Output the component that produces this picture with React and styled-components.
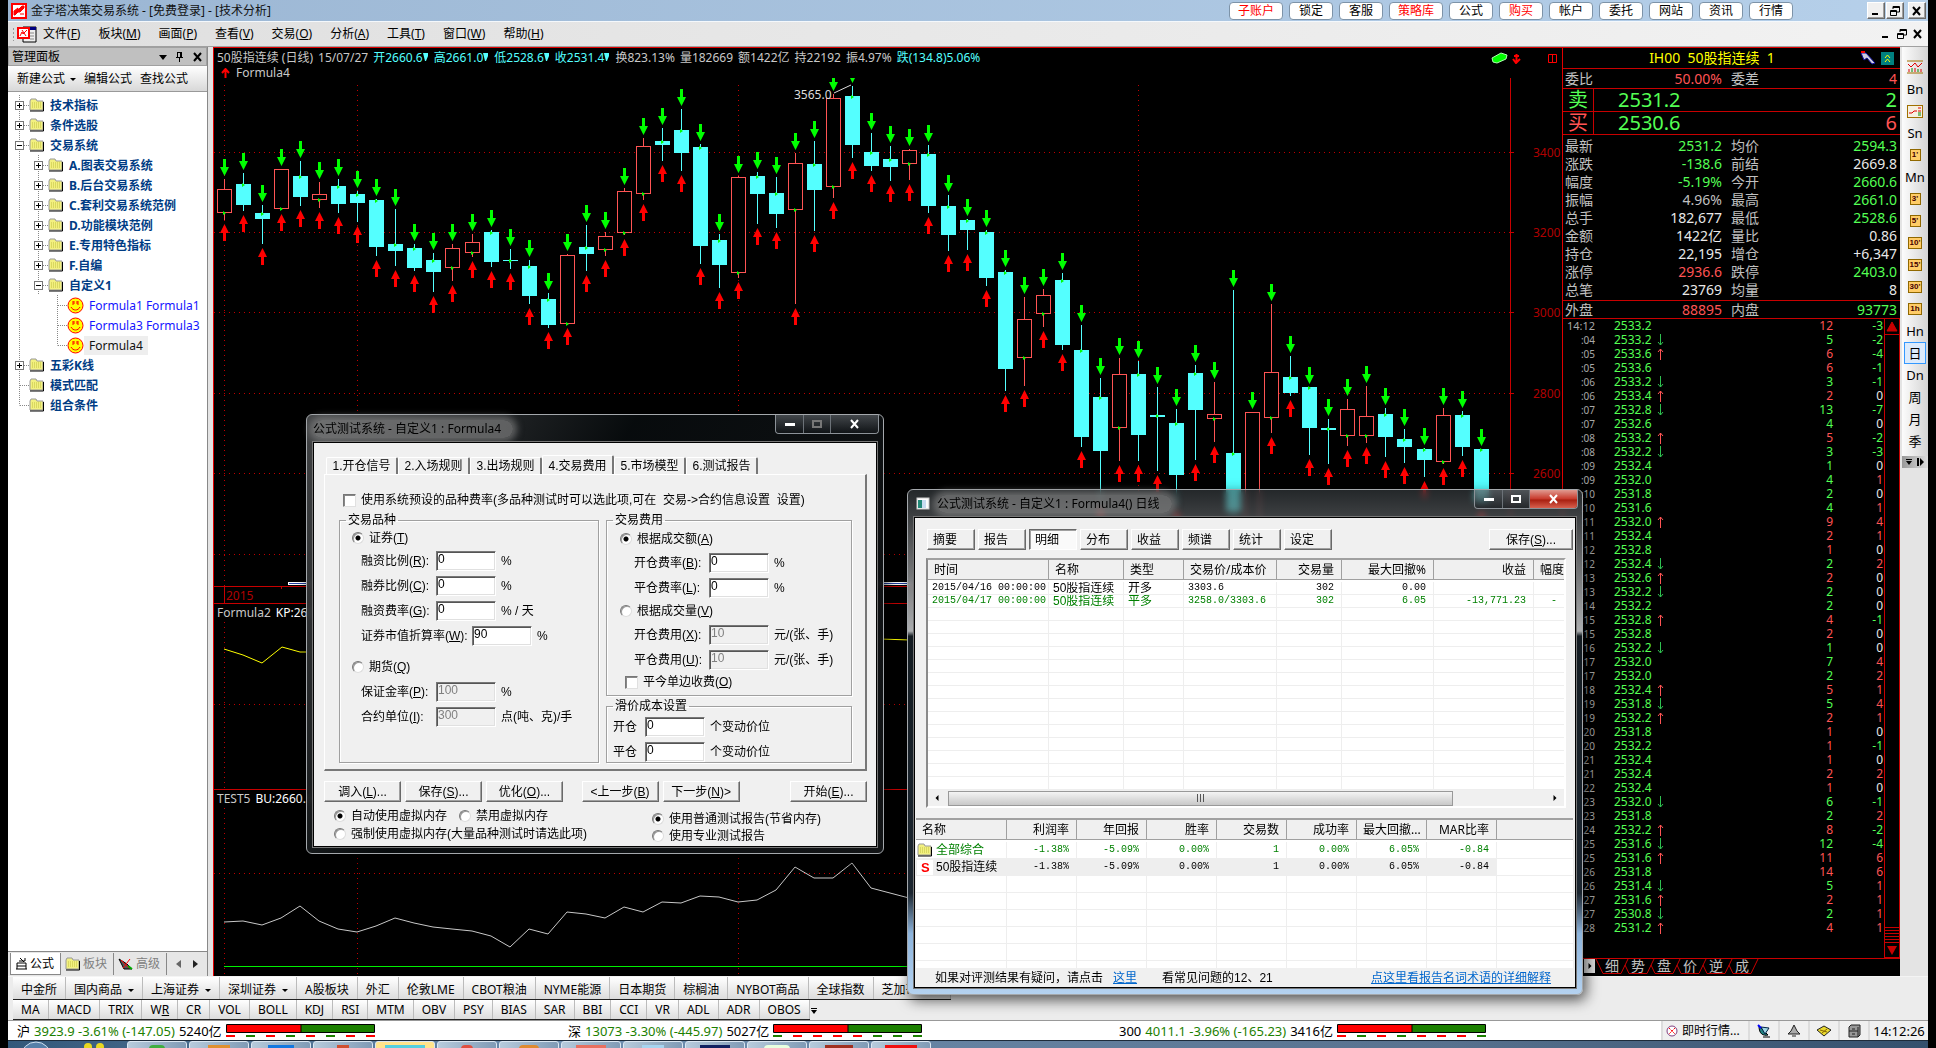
import React from 'react';
import styled, { createGlobalStyle, css } from 'styled-components';

const UI = '"Noto Sans", "Noto Sans CJK SC", sans-serif';
const DIALOG = '"Liberation Sans", "Noto Sans CJK SC", sans-serif';
const MONO = '"Liberation Mono", "Noto Sans CJK SC", monospace';
const CYAN = '#54ffff';
const RED = '#ff5454';
const GREEN = '#54ff54';
const LINE = '#c80000';

const Global = createGlobalStyle`
  * { box-sizing: border-box; }
  html, body { margin: 0; background: #000; }
  body { font: 12px/16px ${UI}; color: #000; overflow: hidden; }
  button { font: inherit; color: inherit; margin: 0; padding: 0; border: 0; background: none; white-space: nowrap; }
  input { font: inherit; margin: 0; }
  table { border-collapse: separate; border-spacing: 0; }
  svg { display: block; flex: none; }
`;

/* ---------- shell ---------- */
const Shell = styled.div`
  position: relative; height: 100vh; display: flex; flex-direction: column;
  padding: 0 8px; background: #000; overflow: hidden;
`;
const TitleBar = styled.header`
  height: 21px; flex: none; display: flex; align-items: center; padding: 0 2px 0 3px;
  background: linear-gradient(90deg, #9bb6d3, #b6d0ea);
`;
const AppTitle = styled.h1`
  margin: 0 auto 0 4px; font: inherit; line-height: 20px; color: #111; white-space: nowrap;
`;
const QuickLinks = styled.nav`display: flex; gap: 6px; margin-right: 74px;`;
const QuickButton = styled.button`
  height: 18px; width: ${(p) => (p.$wide ? 54 : 44)}px; line-height: 14px; border: 1px solid #7d93a8; border-radius: 4px;
  background: #fff; color: ${(p) => (p.$hot ? '#f00' : '#000')};
`;
const WinButtons = styled.div`display: flex; align-items: center; gap: 1px;`;
const bevel = css`
  border: 1px solid; border-color: #fff #696969 #696969 #fff; box-shadow: inset -1px -1px 0 #a0a0a0;
  background: #f0f0f0;
`;
const WinButton = styled.button`
  width: ${(p) => (p.$flat ? 16 : 18)}px; height: 17px; display: flex; align-items: center; justify-content: center;
  ${(p) => !p.$flat && bevel}
  &:last-child { margin-left: ${(p) => (p.$flat ? 0 : 3)}px; }
`;
const MenuBar = styled.nav`
  height: 26px; flex: none; display: flex; align-items: center; gap: 18px; padding: 0 2px 0 4px;
  background: linear-gradient(90deg, #dfdfdf, #f2f2f2); border-top: 1px solid #f4f8fc; border-bottom: 1px solid #a0a0a0;
`;
const MenuButton = styled.button`line-height: 22px;`;
const MenuIcon = styled.span`display: flex; align-items: center; gap: 2px; margin-right: -12px;`;
const Grip = styled.i`width: 3px; height: 14px; background: radial-gradient(circle, #999 1px, transparent 1px) 0 0 / 3px 4px;`;
const MdiButtons = styled.div`display: flex; margin-left: auto;`;
const Body = styled.div`
  flex: 1; min-height: 0; display: flex; background: #e4e4e4; border-bottom: 1px solid #f4f4f4;
`;

/* ---------- formula panel ---------- */
const Side = styled.aside`width: 200px; margin-right: 5px; flex: none; display: flex; flex-direction: column; border-right: 1px solid #888; background: #e6e6e6;`;
const SideHead = styled.div`
  height: 19px; flex: none; display: flex; align-items: center; gap: 8px; padding: 0 2px 0 3px;
  background: #c0c0c0; border: 1px solid #a0a0a0;
  span { margin-right: auto; }
`;
const SideTools = styled.div`
  height: 26px; flex: none; display: flex; align-items: center; gap: 8px; padding-left: 9px;
  background: linear-gradient(#fff, #d8d8d8); border-bottom: 1px solid #999;
`;
const Drop = styled.i`
  display: inline-block; vertical-align: middle; margin-left: ${(p) => p.$gap || 6}px;
  border: 3px solid transparent; border-top-color: #000; border-bottom: 0;
`;
const Tree = styled.ul`
  flex: 1; min-height: 0; margin: 0; padding: 3px 0 0 2px; list-style: none; background: #fff;
  border-bottom: 1px solid #888; overflow: hidden;
`;
const TreeRow = styled.li`
  height: 20px; display: flex; align-items: center; white-space: nowrap;
  font-weight: ${(p) => (p.$leaf ? 400 : 700)}; color: ${(p) => (p.$leaf ? (p.$current ? '#111' : '#1414ff') : '#003c84')};
`;
const TreeText = styled.span`
  padding: 0 5px; line-height: 19px; background: ${(p) => (p.$current ? '#eee' : 'transparent')};
`;
const SideTabs = styled.div`height: 24px; flex: none; display: flex; align-items: center; padding-left: 2px; color: #808080;`;
const SideTab = styled.button`
  height: 22px; display: flex; align-items: center; gap: 2px; padding: 0 6px 0 4px;
  ${(p) => (p.$active ? 'background:#fff;color:#000;border:1px solid #888;border-top:0;' : 'border-right:1px solid #888;')}
`;
const TabArrows = styled.div`display: flex; gap: 9px; padding-left: 8px;`;

/* ---------- chart ---------- */
const Chart = styled.main`
  flex: 1; min-width: 0; display: flex; flex-direction: column; background: #000; color: #c0c0c0;
  border: solid #e00000; border-width: 1px 0 0 1px; overflow: hidden;
`;
const Pane = styled.section`
  flex: ${(p) => p.$share} 1 0; min-height: 0; display: flex; flex-direction: column;
  border-top: ${(p) => (p.$first ? 0 : 1)}px solid ${LINE};
  > svg { flex: 1; min-height: 0; width: 100%; }
`;
const Legend = styled.div`
  height: ${(p) => p.$h || 18}px; flex: none; display: flex; align-items: center; gap: 5px;
  padding: 0 5px 0 ${(p) => p.$pad || 3}px; white-space: nowrap;
`;
const Stat = styled.span`color: ${(p) => p.$c || '#c8c8c8'};`;
const ChartTools = styled.span`
  margin-left: auto; display: flex; align-items: center; gap: 4px;
  svg:last-child { margin-left: 22px; }
`;

/* ---------- quote ---------- */
const Quote = styled.aside`
  width: 338px; flex: none; display: flex; flex-direction: column; background: #000; color: #c0c0c0;
  border: solid #e00000; border-width: 1px 0 0 1px; font-size: 14px;
`;
const QuoteHead = styled.div`
  height: 21px; flex: none; display: flex; align-items: center; justify-content: flex-end; gap: 5px; padding-right: 6px;
  color: #ff0; border-bottom: 1px solid ${LINE}; font-size: 14px;
  h2 { margin: 0 auto; padding-left: 6px; font: inherit; }
`;
const PairRow = styled.div`
  height: ${(p) => p.$h || 18}px; flex: none; display: grid; grid-template-columns: 55px 102px 56px 1fr; align-items: center;
  padding: 0 3px 0 2px; border-bottom: ${(p) => (p.$line ? 1 : 0)}px solid ${LINE};
  span:nth-child(even) { text-align: right; }
  span:nth-child(3) { padding-left: 9px; }
`;
const Val = styled.span`color: ${(p) => p.$c};`;
const BigRow = styled.div`
  height: 23px; flex: none; display: flex; align-items: center; border-bottom: 1px solid ${LINE};
  font-size: 20px; line-height: 22px; padding-right: 3px;
`;
const Side1 = styled.span`width: 31px; text-align: center; border-right: 1px solid ${LINE}; color: ${(p) => p.$c};`;
const BigPrice = styled.span`margin: 0 auto 0 24px; color: ${GREEN};`;
const Stats = styled.div`padding: 2px 0 1px; border-bottom: 1px solid ${LINE}; flex: none;`;
const TickArea = styled.div`flex: 1; min-height: 0; display: flex; overflow: hidden; border-bottom: 1px solid ${LINE};`;
const TickTable = styled.table`
  flex: 1; table-layout: fixed; align-self: flex-start; font-size: 12px; line-height: 14px;
  td { padding: 0; height: 14px; text-align: right; white-space: nowrap; }
  td:nth-child(1) { width: 32px; color: #a8a8a8; font-size: 10px; }
  td:nth-child(2) { width: 62px; padding-left: 19px; text-align: left; color: ${GREEN}; }
  td:nth-child(3) { width: 10px; }
  td:nth-child(5) { width: 51px; padding-right: 1px; }
  tr:first-child td:nth-child(1) { font-size: 11px; }
`;
const TickCell = styled.td`color: ${(p) => p.$c};`;
const TickScroll = styled.div`
  width: 16px; flex: none; display: flex; flex-direction: column; justify-content: space-between;
  border: 1px solid ${LINE}; border-top: 0;
`;
const QuoteTabs = styled.div`height: 17px; flex: none; display: flex; align-items: flex-start; padding-left: 21px;`;
const QuoteTab = styled.button`width: 18px; line-height: 14px; height: 15px; border-bottom: 1px solid ${LINE};`;
const Next = styled.button`
  width: 11px; height: 14px; background: #ddd; display: flex; align-items: center; justify-content: center;
`;

/* ---------- period bar ---------- */
const PeriodRail = styled.nav`width: 28px; flex: none; padding-left: 2px; background: #e4e4e4;`;
const PeriodList = styled.div`
  display: flex; flex-direction: column; align-items: center; padding: 9px 0 4px;
  background: linear-gradient(90deg, #fcfcfc, #d4d4d4);
`;
const PeriodButton = styled.button`
  width: 22px; height: 22px; display: flex; align-items: center; justify-content: center; font-size: 13px;
  ${(p) => p.$on && 'border:1px solid #3399ff;background:#dcebfc;'}
`;
const Chip = styled.span`
  height: 12px; min-width: 11px; padding: 0 1px; background: #fc6; border: 1px solid #906800; color: #400;
  font: bold 8px/10px ${DIALOG};
`;
const RailEnd = styled.div`height: 12px; display: flex; justify-content: space-evenly; align-items: center; background: linear-gradient(90deg, #999, #ddd);`;

/* ---------- bottom bars ---------- */
const Strip = styled.nav`
  height: ${(p) => p.$h}px; flex: none; display: flex; align-items: center; padding-left: 5px; overflow: hidden;
  background: #ececec;
`;
const StripRun = styled.div`
  height: 100%; display: flex; flex: none; align-items: center;
  background: linear-gradient(#fff, #dcdcdc); border-bottom: 1px solid #222;
`;
const StripButton = styled.button`
  padding: ${(p) => p.$top || 0}px 8px 0; height: 100%; border-right: 1px solid #bbb;
`;
const Status = styled.footer`
  height: 20px; flex: none; display: flex; background: #fff; border-top: 1px solid #999;
`;
const IndexCell = styled.div`
  flex: 1; display: flex; align-items: center; padding-left: 9px; gap: 4px; white-space: nowrap; font-size: 13px;
`;
const Green = styled.span`color: #1c8000;`;
const StatusCell = styled.div`
  display: flex; align-items: center; justify-content: ${(p) => (p.$start ? 'flex-start' : 'center')}; gap: 4px; width: ${(p) => p.$w}px; flex: none;
  padding-left: ${(p) => (p.$start ? 3 : 0)}px;
  border-left: 2px solid #ddd; background: #f0f0f0; white-space: nowrap;
`;
const Clock = styled.time`font-size: 13px;`;
const Taskbar = styled.div`
  height: 8px; flex: none; display: flex; gap: 2px; overflow: hidden; padding-left: 12px;
  background: linear-gradient(90deg, #33587a, #6f8fb0 30%, #57718e 75%, #34506d); border-top: 1px solid #1d2b3a;
`;
const TaskButton = styled.span`
  width: 60px; height: 12px; flex: none; display: flex; justify-content: center; padding-top: 3px;
  border: 1px solid #dbe7f2; border-radius: 3px; background: ${(p) => (p.$on ? '#ffe48c' : 'linear-gradient(100deg,#b7cbdc,#7f9ab5)')};
`;
const TaskIcon = styled.i`width: ${(p) => p.$w || 22}px; height: 8px; border-radius: ${(p) => p.$r || 0}px; background: ${(p) => p.$c};`;

/* ---------- floating windows ---------- */
const Win = styled.section`
  position: absolute; left: ${(p) => p.$x}px; top: ${(p) => p.$y}px; width: ${(p) => p.$w}px; height: ${(p) => p.$h}px;
  display: flex; flex-direction: column; padding: 0 6px 6px; border-radius: 6px;
  border: 1px solid #a4a8ac; box-shadow: 3px 5px 14px rgba(0, 0, 0, 0.65);
  background: ${(p) => p.$frame}; backdrop-filter: blur(3px); font-family: ${DIALOG};
`;
const WinTitle = styled.div`
  height: 27px; flex: none; display: flex; align-items: center; font-family: ${UI};
  h2 { margin: 0 auto 0 0; font: inherit; color: #000; padding-right: 12px; line-height: 18px; border-radius: 9px;
    background: rgba(140, 140, 140, 0.6); box-shadow: 0 0 7px 4px rgba(140, 140, 140, 0.6); }
  > svg { margin: 0 7px 0 2px; }
`;
const Caption = styled.div`
  align-self: flex-start; height: 19px; display: flex; border: 1px solid #8c9298; border-top: 0; border-radius: 0 0 4px 4px; overflow: hidden;
  margin-right: -2px;
`;
const CaptionButton = styled.button`
  width: ${(p) => p.$w}px; display: flex; align-items: center; justify-content: center;
  border-right: 1px solid #6c7278; &:last-child { border-right: 0; }
  background: ${(p) => (p.$danger ? 'linear-gradient(#e09a90,#c8382a 50%,#a81f10 55%,#d8604e)' : 'linear-gradient(rgba(120,126,132,.5),rgba(20,24,28,.5))')};
`;
const Client = styled.div`
  flex: 1; min-height: 0; display: flex; flex-direction: column; background: #f0f0f0;
  outline: 1px solid #777; border: 1px solid #000; overflow: hidden;
`;
const PushButton = styled.button`
  ${bevel}
  height: 21px; width: ${(p) => p.$w}px; line-height: 18px; text-align: ${(p) => p.$align || 'center'};
  padding: ${(p) => (p.$align ? '0 5px' : 0)};
  ${(p) => p.$down && 'background:#fafafa;border-color:#696969 #fff #fff #696969;box-shadow:inset 1px 1px 0 #a0a0a0;'}
`;

/* settings dialog */
const Settings = styled.form`display: flex; flex-direction: column; padding: 12px 9px 0 10px; height: 100%;`;
const TabStrip = styled.div`display: flex; align-items: flex-end; padding-left: 2px; height: 19px; flex: none;`;
const Tab = styled.button`
  width: 72px; height: ${(p) => (p.$on ? 20 : 17)}px; margin-bottom: ${(p) => (p.$on ? -1 : 0)}px; line-height: 16px; background: #f0f0f0;
  border: solid; border-width: 1px 2px 0 1px; border-color: #fff #777 #fff #fff; border-radius: 2px 2px 0 0;
`;
const TabPane = styled.div`
  height: 297px; flex: none; border: solid; border-width: 1px 2px 2px 1px; border-color: #fff #777 #777 #fff; padding: 15px 14px 5px 14px;
`;
const Check = styled.input`
  appearance: none; flex: none; width: 13px; height: 13px;
  background: #fff; border: 1px solid; border-color: #777 #e0e0e0 #e0e0e0 #777; box-shadow: inset 1px 1px 0 #888;
`;
const Radio = styled.input`
  appearance: none; flex: none; width: 12px; height: 12px; border-radius: 6px;
  background: #fff; border: 1px solid; border-color: #777 #ddd #ddd #777; box-shadow: inset 1px 1px 0 #999;
  &:checked { background: radial-gradient(circle, #000 2px, #fff 3px); }
`;
const Choice = styled.label`
  display: flex; align-items: center; gap: 5px; white-space: pre; height: ${(p) => p.$h || 20}px; padding-left: ${(p) => p.$pad || 0}px;
`;
const Groups = styled.div`display: grid; grid-template-columns: 260px 246px; gap: 7px; margin-top: 3px;`;
const GroupColumn = styled.div`display: flex; flex-direction: column; gap: 3px;`;
const Group = styled.fieldset`
  margin: 0; min-width: 0; height: ${(p) => p.$h}px; border: 1px solid #a0a0a0; box-shadow: inset 1px 1px 0 #fff, 1px 1px 0 #fff; padding: 0 0 0 ${(p) => p.$pad}px;
  legend { padding: 0 2px; margin-left: ${(p) => 6 - p.$pad}px; line-height: 15px; }
`;
const Field = styled.div`
  display: flex; align-items: center; height: 25px; white-space: pre; padding-left: ${(p) => p.$pad || 0}px;
  label { width: ${(p) => p.$label || 75}px; }
`;
const TextBox = styled.input`
  width: 60px; height: 20px; margin-right: 5px; padding: 0 1px 3px; background: #fff; color: #000;
  border: 1px solid; border-color: #777 #fff #fff #777; box-shadow: inset 1px 1px 0 #555, inset -1px -1px 0 #e0e0e0;
  &:disabled { background: #f0f0f0; color: #808080; }
`;
const Space = styled.div`height: ${(p) => p.$h}px;`;
const Actions = styled.div`display: flex; gap: 4px; margin-top: 10px; `;
const Push = styled.span`flex: ${(p) => p.$f};`;
const Modes = styled.div`display: flex; justify-content: space-between; padding: 5px 46px 0 10px;`;
const ModeLine = styled.div`display: flex; gap: 12px;`;

/* report window */
const ReportTools = styled.div`display: flex; gap: 3px; padding: 11px 2px 0 12px; height: 40px; flex: none;`;
const ListBox = styled.div`
  margin: 0 9px 10px 11px; flex: none; background: #fff; border: 2px solid; border-color: #a0a0a0 #fff #fff #8a8a8a; overflow: hidden;
`;
const Grid = styled.table`
  width: 100%; table-layout: fixed; background: #fff;
  th { height: 20px; padding: 0 7px 0 6px; font-weight: 400; font-family: ${UI}; text-align: left; background: #f0f0f0;
    border-right: 1px solid #a0a0a0; border-bottom: 1px solid #a0a0a0; white-space: nowrap; overflow: hidden; }
  tbody::before { content: ''; display: block; height: 2px; }
  td { height: ${(p) => p.$row}px; padding: 0 7px 0 4px; line-height: 12px; border-right: 1px solid #eee; border-bottom: 1px solid #eee;
    font-size: 12px; white-space: nowrap; overflow: hidden; }
  th:last-child, td:last-child { border-right: 0; }
`;
const GridCell = styled.td`
  && { text-align: ${(p) => (p.$right ? 'right' : 'left')}; color: ${(p) => p.$c || '#000'}; background: ${(p) => (p.$shade ? '#eee' : '#fff')};
  padding-left: ${(p) => (p.$icon ? 1 : 4)}px;
  font-family: ${(p) => (p.$num ? MONO : DIALOG)}; font-size: ${(p) => (p.$num ? 10 : 12)}px; }
`;
const GridHead = styled.th`&& { text-align: ${(p) => (p.$right ? 'right' : 'left')}; width: ${(p) => (p.$w ? p.$w + 'px' : 'auto')}; padding-right: ${(p) => (p.$tight ? 0 : 7)}px; }`;
const HScroll = styled.div`height: 16px; display: flex; align-items: center; background: #f0f0f0; padding: 0 6px; gap: 8px;`;
const Thumb = styled.div`
  flex: 0 0 505px; height: 15px; margin-right: auto; display: flex; align-items: center; justify-content: center;
  border: 1px solid #999; background: linear-gradient(#f4f4f4, #c8c8c8);
`;
const Summary = styled.div`flex: 1; min-height: 0; overflow: hidden; border-top: 2px solid #a0a0a0; background: #fff; margin: 0 2px 0 1px;`;
const NameCell = styled.div`display: flex; align-items: center; gap: 3px; svg { background: #fff; }`;
const Help = styled.div`
  height: 19px; flex: none; display: flex; align-items: center; padding: 0 24px 0 20px; white-space: pre;
  a { color: #0066cc; }
  a:last-child { margin-left: auto; }
  a:first-of-type { margin: 0 25px 0 10px; }
`;

/* ---------- drawings ---------- */
const Tri = ({ d, c = '#000', w = 8, h = 8 }) => (
  <svg width={w} height={h} viewBox="0 0 8 8" aria-hidden="true"><path d={d} fill={c} /></svg>
);
const Logo = () => (
  <svg width="16" height="16" viewBox="0 0 16 16"><rect x="1" y="1" width="14" height="14" fill="#fff" stroke="#f00" strokeWidth="2" /><path d="M3 12V8l4-3v2l4-4h2v2L9 9H7l-3 3zM9 11h4" fill="#f00" stroke="#f00" /></svg>
);
const DocLogo = () => (
  <svg width="20" height="17" viewBox="0 0 20 17"><path d="M6 1h13v15H6z" fill="#eee" stroke="#000" /><path d="M6 1h13v3H6z" fill="#000080" /><path d="M13 7h4M13 10h4M13 13h4" stroke="#888" /><rect x="1" y="2" width="11" height="10" fill="#fff" stroke="#f00" strokeWidth="2" /><path d="M3 10l2-4 1 2 4-4M5 4l4 6" stroke="#f00" fill="none" /></svg>
);
const MinG = ({ c = '#000' }) => <svg width="12" height="12"><path d="M2 9h6" stroke={c} strokeWidth="2" /></svg>;
const RestoreG = () => <svg width="12" height="12"><path d="M4 4V1.500h6.500V7H8M4 2.500h7M1.500 5.500h6V10.500h-6zM1 6.500h7" fill="none" stroke="#000" /></svg>;
const CloseG = ({ c = '#000' }) => <svg width="12" height="12"><path d="M2 2l7 8M9 2L2 10" stroke={c} strokeWidth="2" /></svg>;
const Pin = () => <svg width="9" height="11"><path d="M2 1.500h5M2.500 1v5M6.500 1v5M1 6.500h7M4.500 7v4M5.500 1v5" stroke="#000" fill="none" /></svg>;
const Folder = () => (
  <svg width="16" height="15" viewBox="0 0 16 15"><path d="M1 3l1-2h5l1 2h6v9H1z" fill="#f2f080" stroke="#999" /><path d="M3 5h10M3 7h10M3 9h10" stroke="#c0c040" strokeDasharray="1 1" /><path d="M1 13h13.500V4" stroke="#000" fill="none" /></svg>
);
const Smile = () => (
  <svg width="17" height="17" viewBox="0 0 17 17"><circle cx="8.500" cy="8.500" r="7.500" fill="#ff0" stroke="#f00" /><path d="M6 4v4M7 4v3M10 4v3M11 4v4M4 10c2 4 7 4 9 0" stroke="#f00" fill="none" /></svg>
);
const Twig = ({ kind }) => (
  <svg width="19" height="20" aria-hidden="true">
    {kind !== 'blank' && <path d={kind === 'end' ? 'M9.500 0V10.500' : 'M9.500 0V20'} stroke="#888" strokeDasharray="1 1" fill="none" />}
    {kind !== 'blank' && kind !== 'line' && <path d="M10 10.500H19" stroke="#888" strokeDasharray="1 1" />}
    {(kind === 'plus' || kind === 'minus') && (
      <g><rect x="5.500" y="6.500" width="8" height="8" fill="#fff" stroke="#777" /><path d={kind === 'plus' ? 'M7 10.500h5M9.500 8v5' : 'M7 10.500h5'} stroke="#000" /></g>
    )}
  </svg>
);

const candles = [
  ['r', 421, 451, 518, 543], ['c', 402, 435, 498, 516], ['c', 498, 522, 540, 615], ['r', 391, 391, 506, 512],
  ['c', 366, 411, 474, 501], ['r', 429, 466, 479, 507], ['c', 420, 441, 495, 522], ['c', 456, 465, 492, 549],
  ['c', 480, 483, 624, 651], ['c', 510, 615, 636, 681], ['c', 615, 627, 687, 696], ['c', 642, 663, 699, 759],
  ['r', 615, 628, 683, 726], ['r', 586, 610, 638, 654], ['c', 573, 579, 669, 684], ['c', 630, 663, 666, 690],
  ['c', 663, 681, 771, 795], ['c', 762, 780, 858, 867], ['r', 645, 649, 851, 855], ['c', 558, 624, 645, 696],
  ['r', 579, 592, 629, 651], ['r', 447, 457, 578, 588], ['r', 297, 322, 461, 483], ['c', 267, 306, 318, 366],
  ['c', 210, 273, 342, 396], ['c', 315, 324, 621, 675], ['c', 585, 603, 678, 747], ['r', 411, 415, 698, 717],
  ['c', 399, 411, 465, 555], ['c', 414, 462, 525, 567], ['r', 342, 373, 509, 795], ['c', 306, 375, 453, 576],
  ['r', 165, 178, 440, 477], ['c', 141, 171, 318, 357], ['c', 282, 339, 381, 396], ['c', 321, 360, 384, 426],
  ['r', 330, 334, 371, 423], ['c', 318, 345, 501, 522], ['c', 468, 501, 588, 636], ['c', 540, 543, 573, 633],
  ['c', 573, 579, 717, 741], ['c', 693, 699, 990, 1056], ['r', 774, 841, 953, 1041], ['r', 750, 769, 821, 864],
  ['c', 702, 723, 918, 933], ['c', 858, 933, 1194, 1224], ['c', 1017, 1074, 1236, 1390], ['r', 957, 1006, 1163, 1266],
  ['c', 966, 1005, 1188, 1266], ['c', 1044, 1128, 1134, 1296], ['c', 1110, 1152, 1308, 1400], ['c', 978, 1002, 1113, 1263],
  ['r', 1029, 1126, 1136, 1209], ['c', 753, 1242, 1420, 1440], ['r', 1119, 1120, 1500, 1520], ['r', 795, 1000, 1133, 1182],
  ['c', 951, 1014, 1062, 1071], ['c', 1044, 1044, 1167, 1248], ['c', 1140, 1167, 1173, 1275], ['r', 1080, 1111, 1187, 1221],
  ['r', 1041, 1132, 1187, 1212], ['c', 1107, 1125, 1194, 1254], ['c', 1170, 1200, 1224, 1272], ['c', 1227, 1230, 1263, 1314],
  ['r', 1107, 1129, 1267, 1275], ['c', 1116, 1128, 1224, 1251], ['c', 1230, 1230, 1390, 1400],
];
const slotX = (i) => Math.round(224 + i * 19.04);
const level = (v) => Math.round(v / 3) + 40;

function Candle({ i, d: [kind, hi, top, bot, lo] }) {
  const x = slotX(i);
  const h = level(hi), t = level(top), b = level(bot), l = level(lo);
  const color = kind === 'r' ? RED : CYAN;
  return (
    <g>
      <path d={`M${x + 0.5} ${h}V${t}M${x + 0.5} ${b}V${l}`} stroke={color} />
      {kind === 'r'
        ? <rect x={x - 6.5} y={t + 0.5} width="14" height={Math.max(b - t, 1)} fill="#000" stroke={color} />
        : <rect x={x - 7} y={t} width="15" height={Math.max(b - t, 1)} fill={color} />}
      <path d={`M${x - 1} ${(kind === 'r' ? b : t) - 1}l3 2-3 2z`} fill="#0f0" />
      <path d={`M${x - 1} ${h - 20}h3v8h3l-4.500 9-4.500-9h3z`} fill="#0f0" />
      <path d={`M${x - 1} ${l + 21}h3v-8h3l-4.500-9-4.500 9h3z`} fill="#f00" />
    </g>
  );
}
const Dots = ({ d }) => <path d={d} stroke="#c00000" strokeDasharray="1 4" fill="none" />;
const monthLines = [224.5, 357.5, 738.5, 1138.5];

function PriceChart() {
  return (
    <svg>
      <g transform="translate(-214 -79)">
        {[153.5, 233.5, 313.5, 394.5, 474.5, 555.5].map((y, k) => (
          <g key={y}>
            <Dots d={`M214 ${y}H1510`} />
            <path d={`M1510 ${y}h4`} stroke={LINE} />
            <text x="1533" y={y + 4.5} fill="#b00000" fontSize="12">{3400 - k * 200}</text>
          </g>
        ))}
        {monthLines.map((x) => <Dots key={x} d={`M${x} 86V604`} />)}
        <path d="M1510.500 79V587.500M214 587.500H1562" stroke={LINE} fill="none" />
        <path d="M224.500 587V604M281.500 587v3" stroke={LINE} />
        {candles.map((d, i) => <Candle key={i} i={i} d={d} />)}
        <text x="794" y="100" fill="#ddd" fontSize="12">3565.0</text>
        <path d="M834 94l17-8" stroke="#ddd" />
        <path d="M288 584.500H912" stroke="#fff" strokeWidth="3" /><path d="M289 584.500H912" stroke="#2040a0" />
        <text x="226" y="601" fill="#b00000" fontSize="12">2015</text>
      </g>
    </svg>
  );
}
function KpChart() {
  return (
    <svg>
      <g transform="translate(-214 -623)">
        <Dots d="M214 705.500H1562" />
        {monthLines.map((x) => <Dots key={x} d={`M${x} 623V790`} />)}
        <path d="M224 650l19 6 19 8 20-16 18 5h9L880 640l30 1" stroke="#ff0" fill="none" />
      </g>
    </svg>
  );
}
const buLine = [923, 922, 926, 919, 907, 922, 930, 933, 927, 919, 924, 928, 930, 932, 937, 948, 930, 935, 913, 915, 919, 908, 913, 903, 904, 897, 898, 903, 901, 891, 868, 879, 879, 864, 889, 894, 899];
function BuChart() {
  return (
    <svg>
      <g transform="translate(-214 -809)">
        <Dots d="M214 874.500H1562" />
        {monthLines.map((x) => <Dots key={x} d={`M${x} 809V976`} />)}
        <polyline points={buLine.map((y, i) => `${slotX(i)},${y}`).join(' ')} fill="none" stroke="#c8c8c8" />
        <path d="M224 967.500H1562" stroke="#00f000" />
      </g>
    </svg>
  );
}
const Eraser = () => <svg width="17" height="12"><path d="M1 6l9-5 6 2-1 4-9 4-4-1z" fill="#0f0" stroke="#b0ffb0" /></svg>;
const Anchor = () => <svg width="9" height="11"><path d="M4.500 1v9M2 3h5M1 6l3 4 4-4" stroke="#f00" fill="none" strokeWidth="2" /></svg>;
const RedBox = () => <svg width="10" height="11"><path d="M1.500 1.500h8v8h-8zM5.500 1v9" stroke="#f00" fill="none" /></svg>;
const MarkBox = styled.svg`display: inline-block;`;
const DownMark = () => <MarkBox width="6" height="9"><path d="M0 0h5v3L3 8H2L1 4z" fill={CYAN} /></MarkBox>;

/* ---------- data ---------- */
const menus = [['文件', 'F'], ['板块', 'M'], ['画面', 'P'], ['查看', 'V'], ['交易', 'O'], ['分析', 'A'], ['工具', 'T'], ['窗口', 'W'], ['帮助', 'H']];
const quick = ['子账户', '锁定', '客服', '策略库', '公式', '购买', '帐户', '委托', '网站', '资讯', '行情'];
const hot = ['子账户', '策略库', '购买'];
const tree = [
  [['plus'], '技术指标'], [['plus'], '条件选股'], [['minus'], '交易系统'],
  [['line', 'plus'], 'A.图表交易系统'], [['line', 'plus'], 'B.后台交易系统'], [['line', 'plus'], 'C.套利交易系统范例'],
  [['line', 'plus'], 'D.功能模块范例'], [['line', 'plus'], 'E.专用特色指标'], [['line', 'plus'], 'F.自编'], [['line', 'minus'], '自定义1'],
  [['line', 'blank', 'tee'], 'Formula1 Formula1', 1], [['line', 'blank', 'tee'], 'Formula3 Formula3', 1], [['line', 'blank', 'end'], 'Formula4', 2],
  [['plus'], '五彩K线'], [['tee'], '模式匹配'], [['end'], '组合条件'],
];
const W = '#e8e8e8';
const stats = [
  ['最新', '2531.2', GREEN, '均价', '2594.3', GREEN], ['涨跌', '-138.6', GREEN, '前结', '2669.8', W],
  ['幅度', '-5.19%', GREEN, '今开', '2660.6', GREEN], ['振幅', '4.96%', '#c0c0c0', '最高', '2661.0', GREEN],
  ['总手', '182,677', W, '最低', '2528.6', GREEN], ['金额', '1422亿', W, '量比', '0.86', W],
  ['持仓', '22,195', W, '增仓', '+6,347', W], ['涨停', '2936.6', RED, '跌停', '2403.0', GREEN], ['总笔', '23769', W, '均量', '8', W],
];
const ticks = `14:12 2533.2 - 12r -3|:04 2533.2 d 5g -2|:05 2533.6 u 6r -4|:05 2533.6 - 6r -1|:06 2533.2 d 3g -1|:06 2533.4 u 2r 0|:07 2532.8 d 13g -7|:07 2532.6 - 4g 0|:08 2533.2 u 5r -2|:08 2532.2 d 3g -3|:09 2532.4 - 1g 0|:09 2532.0 - 4g 1|:10 2531.8 - 2g 0|:10 2531.6 - 4g 1|:11 2532.0 u 9r 4|:11 2532.4 - 2r 1|:12 2532.8 - 1r 0|:12 2532.4 d 2g 2|:13 2532.6 u 2r 0|:13 2532.2 d 2g 0|:14 2532.2 - 2g 0|:15 2532.8 u 4r -1|:15 2532.8 - 2r 0|:16 2532.2 d 1g 0|:17 2532.0 - 7g 4|:17 2532.0 - 2g 2|:18 2532.4 u 5r 1|:19 2531.8 d 5g 4|:19 2532.2 u 2r 1|:20 2531.8 - 1r 0|:20 2532.2 - 1r -1|:21 2532.4 - 1r 0|:21 2532.4 - 2r 2|:22 2532.4 - 1r 0|:23 2532.0 d 6g -1|:23 2531.8 - 2g 2|:24 2532.2 u 8r -2|:25 2531.6 d 12g -4|:25 2531.6 u 11r 6|:26 2531.8 - 14r 6|:26 2531.4 d 5g 1|:27 2531.6 u 2r 1|:27 2530.8 d 2g 1|:28 2531.2 u 4r 1`.split('|').map((r) => r.split(' '));
const periods = ['#a', 'Bn', '#b', 'Sn', "*1'", 'Mn', "*3'", "*5'", "*10'", "*15'", "*30'", '*1h', 'Hn', '日', 'Dn', '周', '月', '季'];
const markets = ['中金所', '国内商品▾', '上海证券▾', '深圳证券▾', 'A股板块', '外汇', '伦敦LME', 'CBOT粮油', 'NYME能源', '日本期货', '棕榈油', 'NYBOT商品', '全球指数', '芝加哥期货'];
const indicators = ['MA', 'MACD', 'TRIX', 'WR', 'CR', 'VOL', 'BOLL', 'KDJ', 'RSI', 'MTM', 'OBV', 'PSY', 'BIAS', 'SAR', 'BBI', 'CCI', 'VR', 'ADL', 'ADR', 'OBOS'];
const indices = [
  ['沪', '3923.9 -3.61% (-147.05)', '5240亿', 'rgrgrgrr'],
  ['深', '13073 -3.30% (-445.97)', '5027亿', 'grrrrggg'],
  ['300', '4011.1 -3.96% (-165.23)', '3416亿', 'rgrgrrrg'],
];
const tradeCols = [['时间', 121], ['名称', 75], ['类型', 60], ['交易价/成本价', 93], ['交易量', 65, 1], ['最大回撤%', 92, 1], ['收益', 100, 1], ['幅度', 0]];
const trades = [
  ['2015/04/16 00:00:00', '50股指连续', '开多', '3303.6', '302', '0.00', '', ''],
  ['2015/04/17 00:00:00', '50股指连续', '平多', '3258.0/3303.6', '302', '6.05', '-13,771.23', '-'],
];
const sumCols = ['名称', '利润率', '年回报', '胜率', '交易数', '成功率', '最大回撤...', 'MAR比率'];
const sumVals = ['-1.38%', '-5.09%', '0.00%', '1', '0.00%', '6.05%', '-0.84'];

const sign = (v) => (v === '0' ? W : v.startsWith('-') ? GREEN : RED);
const Key = ({ t, k, end = '' }) => <>{t}(<u>{k}</u>){end}</>;

function TickArrow({ dir }) {
  if (dir === '-') return null;
  return (
    <svg width="7" height="12">
      {dir === 'u' ? <path d="M3.500 12V1M1 4l2.500-3L6 4" stroke={RED} fill="none" /> : <path d="M3.500 0v11M1 8l2.500 3L6 8" stroke="#2fc050" fill="none" />}
    </svg>
  );
}
function PeriodGlyph({ p }) {
  if (p === '#a') return <svg width="16" height="14"><path d="M0 1h16M0 13h16" stroke="#a07000" /><path d="M1 4l3 3 4-4 3 4 4-4" stroke="#e00000" fill="none" /><path d="M2 12V9M8 12V8M14 12V9" stroke="#e00000" /><path d="M5 12V8M11 12V9" stroke="#080" /></svg>;
  if (p === '#b') return <svg width="16" height="13"><rect x="0.500" y="0.500" width="15" height="12" fill="#f6f0e0" stroke="#a07000" /><path d="M2 8h3l2-2h3" stroke="#e00000" fill="none" /><path d="M11 3h3M11 6h3" stroke="#e00000" /><path d="M11 8h3M11 10h3" stroke="#080" /></svg>;
  return p[0] === '*' ? <Chip>{p.slice(1)}</Chip> : p;
}
function IndexMeter({ dashes }) {
  return (
    <svg width="149" height="15">
      <rect x="1" y="2" width="74" height="7" fill="#f00" /><rect x="75" y="2" width="73" height="7" fill="#1c8000" />
      <path d="M0.500 1.500h148v8h-148zM75 2v7" fill="none" stroke="#000" />
      {dashes.split('').map((c, i) => <rect key={i} x={i * 20} y="12" width="9" height="2" fill={c === 'r' ? '#f00' : '#1c8000'} />)}
    </svg>
  );
}
function Captions({ danger }) {
  return (
    <Caption>
      <CaptionButton type="button" aria-label="最小化" $w={28}><svg width="12" height="8"><rect x="1" y="3" width="10" height="3" fill="#fff" /></svg></CaptionButton>
      <CaptionButton type="button" aria-label="最大化" $w={27}><svg width="12" height="10"><rect x="2" y="2" width="8" height="6" fill="none" stroke={danger ? '#fff' : '#777'} strokeWidth="2" /></svg></CaptionButton>
      <CaptionButton type="button" aria-label="关闭" $w={47} $danger={danger}><CloseG c="#fff" /></CaptionButton>
    </Caption>
  );
}
function Input({ id, label, k, value, unit, disabled, pad, width }) {
  return (
    <Field $pad={pad} $label={width}>
      <label htmlFor={id}>{k ? <Key t={label} k={k} end=":" /> : label}</label>
      <TextBox id={id} defaultValue={value} disabled={disabled} />
      {unit}
    </Field>
  );
}

function SettingsDialog() {
  return (
    <Win $x={306} $y={414} $w={578} $h={440} $frame="linear-gradient(120deg, rgba(70,72,74,.95), rgba(8,12,14,.92) 40%, rgba(20,22,24,.95))">
      <WinTitle><h2>公式测试系统 - 自定义1 : Formula4</h2><Captions /></WinTitle>
      <Client>
        <Settings>
          <TabStrip role="tablist">
            {['1.开仓信号', '2.入场规则', '3.出场规则', '4.交易费用', '5.市场模型', '6.测试报告'].map((t, i) => (
              <Tab key={t} type="button" role="tab" $on={i === 3}>{t}</Tab>
            ))}
          </TabStrip>
          <TabPane>
            <Choice $pad={4}><Check type="checkbox" />使用系统预设的品种费率(多品种测试时可以选此项,可在  交易-&gt;合约信息设置  设置)</Choice>
            <Groups>
              <Group $h={250} $pad={11}>
                <legend>交易品种</legend>
                <Choice $pad={1}><Radio type="radio" name="kind" defaultChecked /><span><Key t="证券" k="T" /></span></Choice>
                <Input id="r" label="融资比例" k="R" value="0" unit="%" pad={10} />
                <Input id="c" label="融券比例" k="C" value="0" unit="%" pad={10} />
                <Input id="g" label="融资费率" k="G" value="0" unit="% / 天" pad={10} />
                <Input id="w" label="证券市值折算率" k="W" value="90" unit="%" pad={10} width={111} />
                <Space $h={7} />
                <Choice $pad={1} $h={24}><Radio type="radio" name="kind" /><span><Key t="期货" k="Q" /></span></Choice>
                <Input id="p" label="保证金率" k="P" value="100" unit="%" pad={10} disabled />
                <Input id="i" label="合约单位" k="I" value="300" unit="点(吨、克)/手" pad={10} disabled />
              </Group>
              <GroupColumn>
                <Group $h={183} $pad={13}>
                  <legend>交易费用</legend>
                  <Choice $h={22}><Radio type="radio" name="fee" defaultChecked /><span><Key t="根据成交额" k="A" /></span></Choice>
                  <Input id="b" label="开仓费率" k="B" value="0" unit="%" pad={14} />
                  <Input id="l" label="平仓费率" k="L" value="0" unit="%" pad={14} />
                  <Choice $h={22}><Radio type="radio" name="fee" /><span><Key t="根据成交量" k="V" /></span></Choice>
                  <Input id="x" label="开仓费用" k="X" value="10" unit="元/(张、手)" pad={14} disabled />
                  <Input id="u" label="平仓费用" k="U" value="10" unit="元/(张、手)" pad={14} disabled />
                  <Choice $pad={5}><Check type="checkbox" /><span><Key t="平今单边收费" k="O" /></span></Choice>
                </Group>
                <Group $h={64} $pad={6}>
                  <legend>滑价成本设置</legend>
                  <Input id="open" label="开仓" value="0" unit="个变动价位" width={32} />
                  <Input id="close" label="平仓" value="0" unit="个变动价位" width={32} />
                </Group>
              </GroupColumn>
            </Groups>
          </TabPane>
          <Actions>
            <PushButton type="button" $w={77}><Key t="调入" k="L" end="..." /></PushButton>
            <PushButton type="button" $w={77}><Key t="保存" k="S" end="..." /></PushButton>
            <PushButton type="button" $w={77}><Key t="优化" k="O" end="..." /></PushButton>
            <Push $f={1} />
            <PushButton type="button" $w={77}><Key t="<上一步" k="B" /></PushButton>
            <PushButton type="button" $w={77}><Key t="下一步" k="N" end=">" /></PushButton>
            <Push $f={4} />
            <PushButton type="button" $w={77}><Key t="开始" k="E" end="..." /></PushButton>
          </Actions>
          <Modes>
            <div>
              <ModeLine>
                <Choice $h={18}><Radio type="radio" name="mem" defaultChecked />自动使用虚拟内存</Choice>
                <Choice $h={18}><Radio type="radio" name="mem" />禁用虚拟内存</Choice>
              </ModeLine>
              <Choice $h={18}><Radio type="radio" name="mem" />强制使用虚拟内存(大量品种测试时请选此项)</Choice>
            </div>
            <div>
              <Space $h={3} />
              <Choice $h={18}><Radio type="radio" name="rep" defaultChecked />使用普通测试报告(节省内存)</Choice>
              <Choice $h={16}><Radio type="radio" name="rep" />使用专业测试报告</Choice>
            </div>
          </Modes>
        </Settings>
      </Client>
    </Win>
  );
}

function ReportWindow() {
  const blank = (n, cols) => Array.from({ length: n }, (_, i) => <tr key={i}>{Array.from({ length: cols }, (_, j) => <td key={j} />)}</tr>);
  return (
    <Win $x={907} $y={489} $w={676} $h={506} $frame="linear-gradient(rgba(60,66,70,.6), rgba(110,112,114,.85) 12%, rgba(190,192,194,.9) 28%, #141c22 29%, #1c2630 80%, #8db4dc 88%, #b4d2f0)">
      <WinTitle>
        <svg width="14" height="13"><rect x="1" y="1" width="12" height="11" fill="#fff" stroke="#ccc" /><rect x="2" y="3" width="4" height="8" fill="#287" /><rect x="6" y="3" width="4" height="8" fill="#c8dcf0" /></svg>
        <h2>公式测试系统 - 自定义1 : Formula4() 日线</h2><Captions danger />
      </WinTitle>
      <Client>
        <ReportTools>
          {['摘要', '报告', '明细', '分布', '收益', '频谱', '统计', '设定'].map((t) => <PushButton key={t} $w={48} $align="left" $down={t === '明细'}>{t}</PushButton>)}
          <Push $f={1} />
          <PushButton $w={84}><Key t="保存" k="S" end="..." /></PushButton>
        </ReportTools>
        <ListBox>
          <Grid $row={13}>
            <thead><tr>{tradeCols.map(([t, w, r]) => <GridHead key={t} $w={w} $right={r} $tight={!w}>{t}</GridHead>)}</tr></thead>
            <tbody>
              {trades.map((row, n) => (
                <tr key={n}>{row.map((v, i) => <GridCell key={i} $c={n ? '#008000' : '#000'} $num={i !== 1 && i !== 2} $right={i > 3}>{v}</GridCell>)}</tr>
              ))}
              {blank(14, 8)}
            </tbody>
          </Grid>
          <HScroll>
            <Tri d="M6 0v8L2 4z" w={6} />
            <Thumb><svg width="9" height="8"><path d="M1.500 0v8M4.500 0v8M7.500 0v8" stroke="#555" /></svg></Thumb>
            <Tri d="M2 0v8l4-4z" w={6} />
          </HScroll>
        </ListBox>
        <Summary>
          <Grid $row={17}>
            <thead><tr>
              {sumCols.map((t, i) => <GridHead key={t} $w={i ? 70 : 91} $right={i > 0}>{t}</GridHead>)}<GridHead aria-label="空列" />
            </tr></thead>
            <tbody>
              {[['全部综合', '#008000'], ['50股指连续', '#000']].map(([name, c], n) => (
                <tr key={name}>
                  <GridCell $c={c} $shade={n} $icon><NameCell>
                    {n ? <svg width="16" height="15"><text x="4" y="12" fontSize="13" fontWeight="bold" fill="#f00">S</text></svg> : <Folder />}{name}
                  </NameCell></GridCell>
                  {sumVals.map((v, i) => <GridCell key={i} $c={c} $num $right $shade={n}>{v}</GridCell>)}
                  <td />
                </tr>
              ))}
              {blank(6, 9)}
            </tbody>
          </Grid>
        </Summary>
        <Help>如果对评测结果有疑问，请点击<a href="#faq">这里</a>看常见问题的12、21<a href="#terms">点这里看报告名词术语的详细解释</a></Help>
      </Client>
    </Win>
  );
}

export default function App() {
  return (
    <Shell>
      <Global />
      <TitleBar>
        <Logo />
        <AppTitle>金字塔决策交易系统 - [免费登录] - [技术分析]</AppTitle>
        <QuickLinks>{quick.map((q) => <QuickButton key={q} $hot={hot.includes(q)} $wide={q.length > 2}>{q}</QuickButton>)}</QuickLinks>
        <WinButtons>
          <WinButton aria-label="最小化"><MinG /></WinButton>
          <WinButton aria-label="还原"><RestoreG /></WinButton>
          <WinButton aria-label="关闭"><CloseG /></WinButton>
        </WinButtons>
      </TitleBar>
      <MenuBar>
        <MenuIcon><Grip /><DocLogo /></MenuIcon>
        {menus.map(([t, k]) => <MenuButton key={t}><Key t={t} k={k} /></MenuButton>)}
        <MdiButtons>
          <WinButton $flat aria-label="最小化"><MinG /></WinButton>
          <WinButton $flat aria-label="还原"><RestoreG /></WinButton>
          <WinButton $flat aria-label="关闭"><CloseG /></WinButton>
        </MdiButtons>
      </MenuBar>

      <Body>
        <Side>
          <SideHead><span>管理面板</span><Tri d="M0 2h8L4 7z" /><Pin /><CloseG /></SideHead>
          <SideTools><button>新建公式<Drop $gap={5} /></button><button>编辑公式</button><button>查找公式</button></SideTools>
          <Tree>
            {tree.map(([twigs, t, leaf]) => (
              <TreeRow key={t} $leaf={leaf} $current={leaf === 2}>
                {twigs.map((k, i) => <Twig key={i} kind={k} />)}
                {leaf ? <Smile /> : <Folder />}
                <TreeText $current={leaf === 2}>{t}</TreeText>
              </TreeRow>
            ))}
          </Tree>
          <SideTabs>
            <SideTab $active><svg width="13" height="13"><path d="M1 12h11M2 9h9M2 6h9M2 6v6M11 6v6M5 1l4 4M4 4h6V1" stroke="#000" fill="none" /></svg>公式</SideTab>
            <SideTab><Folder />板块</SideTab>
            <SideTab><svg width="16" height="15"><path d="M1 2l5 10h8L9 7z" fill="#555" stroke="#000" /><path d="M3 3l8 8M12 2l-7 9" stroke="#f00" /><path d="M10 9l4 3" stroke="#0a0" strokeWidth="2" /></svg>高级</SideTab>
            <TabArrows><Tri d="M6 0v8L1 4z" c="#666" /><Tri d="M1 0v8l5-4z" c="#222" /></TabArrows>
          </SideTabs>
        </Side>

        <Chart>
          <Pane $share={556} $first>
            <Legend $h={20}>
              <Stat>50股指连续 (日线)</Stat><Stat>15/07/27</Stat>
              <Stat $c={CYAN}>开2660.6<DownMark /></Stat><Stat $c={CYAN}>高2661.0<DownMark /></Stat>
              <Stat $c={CYAN}>低2528.6<DownMark /></Stat><Stat $c={CYAN}>收2531.4<DownMark /></Stat>
              <Stat>换823.13%</Stat><Stat>量182669</Stat><Stat>额1422亿</Stat><Stat>持22192</Stat><Stat>振4.97%</Stat>
              <Stat $c={CYAN}>跌(134.8)5.06%</Stat>
              <ChartTools><Eraser /><Anchor /><RedBox /></ChartTools>
            </Legend>
            <Legend $h={10} $pad={6}><svg width="11" height="10"><path d="M5.500 10V2M2 5l3.500-4L9 5" stroke="#f00" strokeWidth="2" fill="none" /></svg><Stat>Formula4</Stat></Legend>
            <PriceChart />
          </Pane>
          <Pane $share={186}>
            <Legend><Stat>Formula2</Stat><Stat $c="#fff">KP:2660.6</Stat></Legend>
            <KpChart />
          </Pane>
          <Pane $share={186}>
            <Legend><Stat>TEST5</Stat><Stat $c="#fff">BU:2660.6</Stat></Legend>
            <BuChart />
          </Pane>
        </Chart>

        <Quote>
          <QuoteHead>
            <h2>IH00&nbsp; 50股指连续&nbsp; 1</h2>
            <svg width="16" height="14"><path d="M1 2h5l9 10-3 1-5-6-3 2z" fill="#ccd" stroke="#1010a0" /><path d="M1 1h4" stroke="#f00" strokeWidth="2" /></svg>
            <svg width="13" height="13"><rect width="13" height="13" fill="#008080" /><path d="M4 6l2.500-3L9 6M4 10l2.500-3L9 10" stroke="#ff0" fill="none" /></svg>
          </QuoteHead>
          <PairRow $h={20} $line><span>委比</span><Val $c={RED}>50.00%</Val><span>委差</span><Val $c={RED}>4</Val></PairRow>
          <BigRow><Side1 $c={GREEN}>卖</Side1><BigPrice>2531.2</BigPrice><Val $c={GREEN}>2</Val></BigRow>
          <BigRow><Side1 $c={RED}>买</Side1><BigPrice>2530.6</BigPrice><Val $c={RED}>6</Val></BigRow>
          <Stats>
            {stats.map(([a, b, c, d, e, f]) => <PairRow key={a}><span>{a}</span><Val $c={c}>{b}</Val><span>{d}</span><Val $c={f}>{e}</Val></PairRow>)}
          </Stats>
          <PairRow $line><span>外盘</span><Val $c={RED}>88895</Val><span>内盘</span><Val $c={GREEN}>93773</Val></PairRow>
          <TickArea>
            <TickTable><tbody>
              {ticks.map(([t, p, d, v, o], i) => (
                <tr key={i}>
                  <td>{t}</td><td>{p}</td><td><TickArrow dir={d} /></td>
                  <TickCell $c={v.endsWith('r') ? RED : GREEN}>{v.slice(0, -1)}</TickCell><TickCell $c={sign(o)}>{o}</TickCell>
                </tr>
              ))}
            </tbody></TickTable>
            <TickScroll>
              <svg width="14" height="16"><path d="M7 3l5 9H2zM0 15.500h14" fill="#c80000" stroke={LINE} /></svg>
              <svg width="14" height="31"><path d="M0 1.500h14M0 4.500h14M0 7.500h14M0 10.500h14M0 13.500h14M0 16.500h14" stroke={LINE} /><path d="M2 20h10l-5 9z" fill={LINE} /></svg>
            </TickScroll>
          </TickArea>
          <QuoteTabs>
            <Next aria-label="下一页"><Tri d="M2 0v8l4-4z" w={6} /></Next>
            {['细', '势', '盘', '价', '逆', '成'].map((t, i) => (
              <React.Fragment key={t}>
                <svg width="8" height="15"><path d={i ? 'M0 14.500L7 0M4 6l4 8.500' : 'M1 0l7 14.500'} stroke={LINE} fill="none" /></svg>
                <QuoteTab>{t}</QuoteTab>
              </React.Fragment>
            ))}
            <svg width="8" height="15"><path d="M0 14.500L7 0" stroke={LINE} /></svg>
          </QuoteTabs>
        </Quote>

        <PeriodRail>
          <PeriodList>
            {periods.map((p) => <PeriodButton key={p} $on={p === '日'} aria-label={p[0] === '#' ? '周期图' : undefined}><PeriodGlyph p={p} /></PeriodButton>)}
          </PeriodList>
          <RailEnd><Tri d="M1 3h6L4 7zM1 1h6v1H1z" /><Tri d="M0 0h2v8H0zM3 0v8l4-4z" /></RailEnd>
        </PeriodRail>
      </Body>

      <Strip $h={23}>
        <StripRun>{markets.map((m) => <StripButton key={m} $top={3}>{m.replace('▾', '')}{m.endsWith('▾') && <Drop />}</StripButton>)}</StripRun>
      </Strip>
      <Strip $h={20}>
        <StripRun>{indicators.map((m) => <StripButton key={m}>{m === 'WR' ? <>W<u>R</u></> : m}</StripButton>)}</StripRun>
        <Tri d="M1 4h6L4 8zM1 2h6v1H1z" />
      </Strip>
      <Status>
        {indices.map(([n, v, amt, d]) => <IndexCell key={n}><span>{n}</span><Green>{v}</Green><span>{amt}</span><IndexMeter dashes={d} /></IndexCell>)}
        <StatusCell $w={87} $start><svg width="12" height="12"><circle cx="6" cy="6" r="5" fill="#fff" stroke="#804080" /><path d="M3 3l6 6M9 3L3 9" stroke="#f00" strokeDasharray="2 1" /></svg>即时行情...</StatusCell>
        <StatusCell $w={30}><svg width="15" height="14"><path d="M2 2c0 8 4 10 9 9z" fill="#208080" stroke="#000" /><path d="M4 3l8 1-4 6z" fill="#a0d8e8" stroke="#024" /><path d="M1 1l3 3" stroke="#00f" strokeWidth="2" /><path d="M6 13h7" stroke="#000" /></svg></StatusCell>
        <StatusCell $w={30}><svg width="14" height="13"><path d="M7 1l3 6 3 3H1l3-3z" fill="#aaa" stroke="#222" /><path d="M5 12h4" stroke="#222" /></svg></StatusCell>
        <StatusCell $w={30}><svg width="16" height="12"><path d="M1 5l7-4 7 4-7 6z" fill="#e8d830" stroke="#222" /><path d="M4 5l7 2M11 4L6 8" stroke="#876800" /></svg></StatusCell>
        <StatusCell $w={30}><svg width="13" height="14"><path d="M1 3l2-2h9v10l-2 2H1z" fill="#999" stroke="#222" /><path d="M1 7h9M4 5h3M4 10h3M10 3v10" stroke="#222" /></svg></StatusCell>
        <StatusCell $w={60}><Clock>14:12:26</Clock></StatusCell>
      </Status>
      <Taskbar>
        <svg width="105" height="8"><circle cx="16" cy="16" r="15" fill="#557fa8" stroke="#cfe0f0" /><circle cx="68" cy="6" r="4" fill="#e8d820" /><circle cx="80" cy="6" r="4" fill="#e8d820" /></svg>
        {[['#3fae3f', 0, 16, 8], ['#e09030'], ['#1478e0', 0, 26], ['#d05030', 0, 12], ['#54cfe0', 1, 40], ['#e05040', 0, 12, 8], ['#e08a30', 0, 20, 8], ['#e87060', 0, 30], ['#a8d4f0'], ['#102060', 0, 30], ['#e8ffe0', 0, 26, 4], ['#a03020', 0, 28], ['#f01010', 0, 32]].map(([c, on, w, r], i) => (
          <TaskButton key={i} $on={on}><TaskIcon $c={c} $w={w} $r={r} /></TaskButton>
        ))}
      </Taskbar>

      <SettingsDialog />
      <ReportWindow />
    </Shell>
  );
}
